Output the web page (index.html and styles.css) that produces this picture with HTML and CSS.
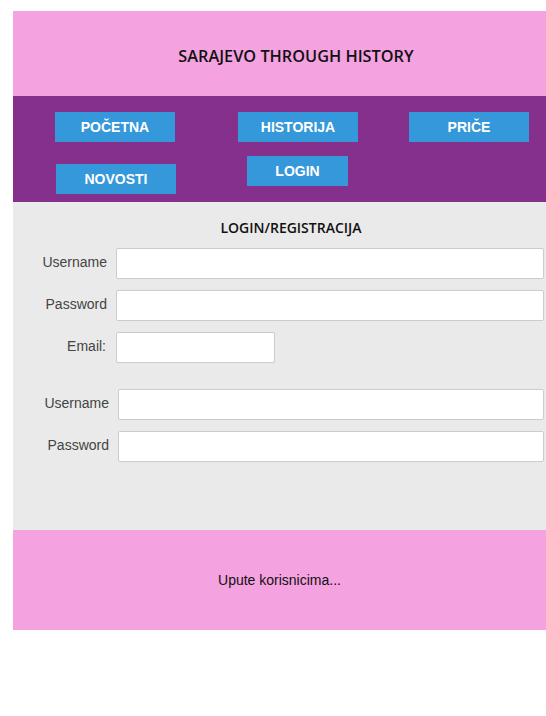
FILE: index.html
```html
<!DOCTYPE html>
<html lang="bs">
<head>
<meta charset="utf-8">
<title>Sarajevo through history</title>
<link rel="stylesheet" href="styles.css">
</head>
<body>
<div class="page">
  <header class="header">
    <h1 class="title">SARAJEVO THROUGH HISTORY</h1>
  </header>
  <nav class="nav">
    <div class="nav-row nav-row-1">
      <a class="btn btn-pocetna" href="#">POČETNA</a>
      <a class="btn btn-historija" href="#">HISTORIJA</a>
      <a class="btn btn-price" href="#">PRIČE</a>
    </div>
    <div class="nav-row nav-row-2">
      <a class="btn btn-novosti" href="#">NOVOSTI</a>
      <a class="btn btn-login" href="#">LOGIN</a>
    </div>
  </nav>
  <main class="main">
    <h2 class="section-title">LOGIN/REGISTRACIJA</h2>
    <form class="form form-reg">
      <div class="row"><label class="lbl">Username</label><input class="inp" type="text"></div>
      <div class="row"><label class="lbl">Password</label><input class="inp" type="password"></div>
      <div class="row"><label class="lbl lbl-email">Email:</label><input class="inp inp-short" type="email"></div>
    </form>
    <form class="form form-login">
      <div class="row"><label class="lbl">Username</label><input class="inp" type="text"></div>
      <div class="row"><label class="lbl">Password</label><input class="inp" type="password"></div>
    </form>
  </main>
  <footer class="footer">
    <p class="footer-text">Upute korisnicima...</p>
  </footer>
</div>
</body>
</html>
```
FILE: styles.css
```css
html, body {
  margin: 0;
  padding: 0;
  background: #ffffff;
  overflow: hidden;
}
.page {
  margin: 11px 0 0 13px;
  width: 533px;
  font-family: "Liberation Sans", Arial, sans-serif;
}
.header {
  background: #f5a2e0;
  height: 85px;
  box-sizing: border-box;
  padding: 34px 0 0 33px;
}
.title {
  margin: 0;
  text-align: center;
  font-family: "Open Sans", sans-serif;
  font-weight: 600;
  font-size: 16.3px;
  line-height: 22px;
  color: #111;
}
.nav {
  background: #84308c;
  height: 106px;
  box-sizing: border-box;
  padding-top: 16px;
}
.nav-row {
  display: flex;
  align-items: flex-start;
}
.nav-row-1 {
  padding-left: 42px;
}
.nav-row-2 {
  padding-left: 43px;
  margin-top: 14px;
}
.btn {
  display: flex;
  align-items: center;
  justify-content: center;
  width: 120px;
  height: 30px;
  background: #3598db;
  color: #ffffff;
  font-weight: bold;
  font-size: 14px;
  text-decoration: none;
}
.btn-historija { margin-left: 63px; }
.btn-price { margin-left: 51px; }
.btn-novosti { margin-top: 8px; }
.btn-login { width: 101px; margin-left: 71px; }
.main {
  background: #eaeaea;
  height: 328px;
  box-sizing: border-box;
  padding-top: 16px;
}
.section-title {
  margin: 0 0 10px 0;
  padding-left: 23px;
  text-align: center;
  font-family: "Open Sans", sans-serif;
  font-weight: 600;
  font-size: 14px;
  line-height: 20px;
  color: #111;
}
.form {
  display: flex;
  flex-direction: column;
  gap: 11px;
}
.form-login {
  margin-top: 26px;
}
.row {
  display: flex;
  align-items: flex-start;
}
.lbl {
  width: 94px;
  padding-top: 6px;
  line-height: 16px;
  text-align: right;
  font-size: 14px;
  color: #444;
  margin-right: 9px;
}
.form-login .lbl { width: 96px; }
.lbl-email { width: 93px; margin-right: 10px; }
.inp {
  box-sizing: border-box;
  width: 428px;
  height: 31px;
  margin: 0;
  border: 1px solid #cccccc;
  border-radius: 2px;
  background: #fff;
  padding: 0 6px;
}
.form-login .inp { width: 426px; }
.inp-short { width: 159px; }
.footer {
  background: #f5a2e0;
  height: 100px;
  display: flex;
  align-items: center;
  justify-content: center;
}
.footer-text {
  margin: 0;
  font-size: 14px;
  color: #111;
}
```
